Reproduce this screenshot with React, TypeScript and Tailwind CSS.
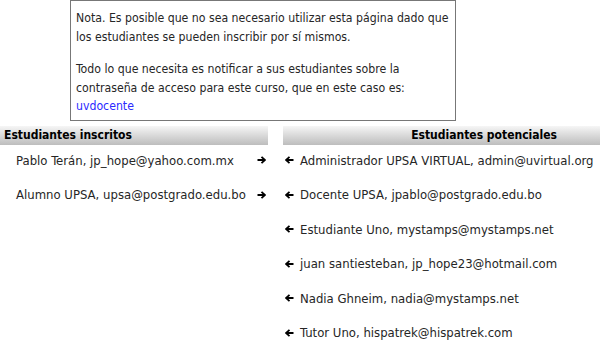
import React from "react";

const inscritos = [
  "Pablo Terán, jp_hope@yahoo.com.mx",
  "Alumno UPSA, upsa@postgrado.edu.bo",
];

const potenciales = [
  "Administrador UPSA VIRTUAL, admin@uvirtual.org",
  "Docente UPSA, jpablo@postgrado.edu.bo",
  "Estudiante Uno, mystamps@mystamps.net",
  "juan santiesteban, jp_hope23@hotmail.com",
  "Nadia Ghneim, nadia@mystamps.net",
  "Tutor Uno, hispatrek@hispatrek.com",
];

function Arrow({ left = false }: { left?: boolean }) {
  return (
    <svg width="9" height="8" viewBox="0 0 9 8" className={left ? "rotate-180" : ""}>
      <path d="M0.5 4 H7" stroke="#000" strokeWidth="2" />
      <path d="M4.5 0.8 L8 4 L4.5 7.2" stroke="#000" strokeWidth="1.8" fill="none" />
    </svg>
  );
}

function App() {
  return (
    <div
      className="w-[600px] h-[342px] overflow-hidden bg-white text-[13px] text-[#262626]"
      style={{ fontFamily: '"DejaVu Sans Condensed", "DejaVu Sans", sans-serif' }}
    >
      <div className="ml-[70px] w-[386px] h-[121px] border border-[#777] px-[5px] pt-[8px] text-[12.2px] leading-[18.5px] whitespace-nowrap">
        <p>
          Nota. Es posible que no sea necesario utilizar esta página dado que
          <br />
          los estudiantes se pueden inscribir por sí mismos.
        </p>
        <p className="mt-[14px]">
          Todo lo que necesita es notificar a sus estudiantes sobre la
          <br />
          contraseña de acceso para este curso, que en este caso es:
          <br />
          <a className="text-[#2a2aff]">uvdocente</a>
        </p>
      </div>

      <div className="flex mt-[5px]">
        <div className="w-[268px]">
          <div className="h-[19px] bg-gradient-to-b from-[#f6f6f6] to-[#bdbdbd] font-bold text-[12px] text-black pl-[4px] leading-[19px]">
            Estudiantes inscritos
          </div>
          <div className="-mt-[2px]">
            {inscritos.map((s) => (
              <div key={s} className="flex items-center justify-between h-[34.5px] pl-[16px] pr-[2px]">
                <span>{s}</span>
                <Arrow />
              </div>
            ))}
          </div>
        </div>
        <div className="flex-1 ml-[15px]">
          <div className="h-[19px] bg-gradient-to-b from-[#f6f6f6] to-[#bdbdbd] font-bold text-[12px] text-black text-right pr-[43px] leading-[19px]">
            Estudiantes potenciales
          </div>
          <div className="-mt-[2px]">
            {potenciales.map((s) => (
              <div key={s} className="flex items-center h-[34.5px] pl-[2px]">
                <span className="w-[15px] flex">
                  <Arrow left />
                </span>
                <span>{s}</span>
              </div>
            ))}
          </div>
        </div>
      </div>
    </div>
  );
}

export default App;
